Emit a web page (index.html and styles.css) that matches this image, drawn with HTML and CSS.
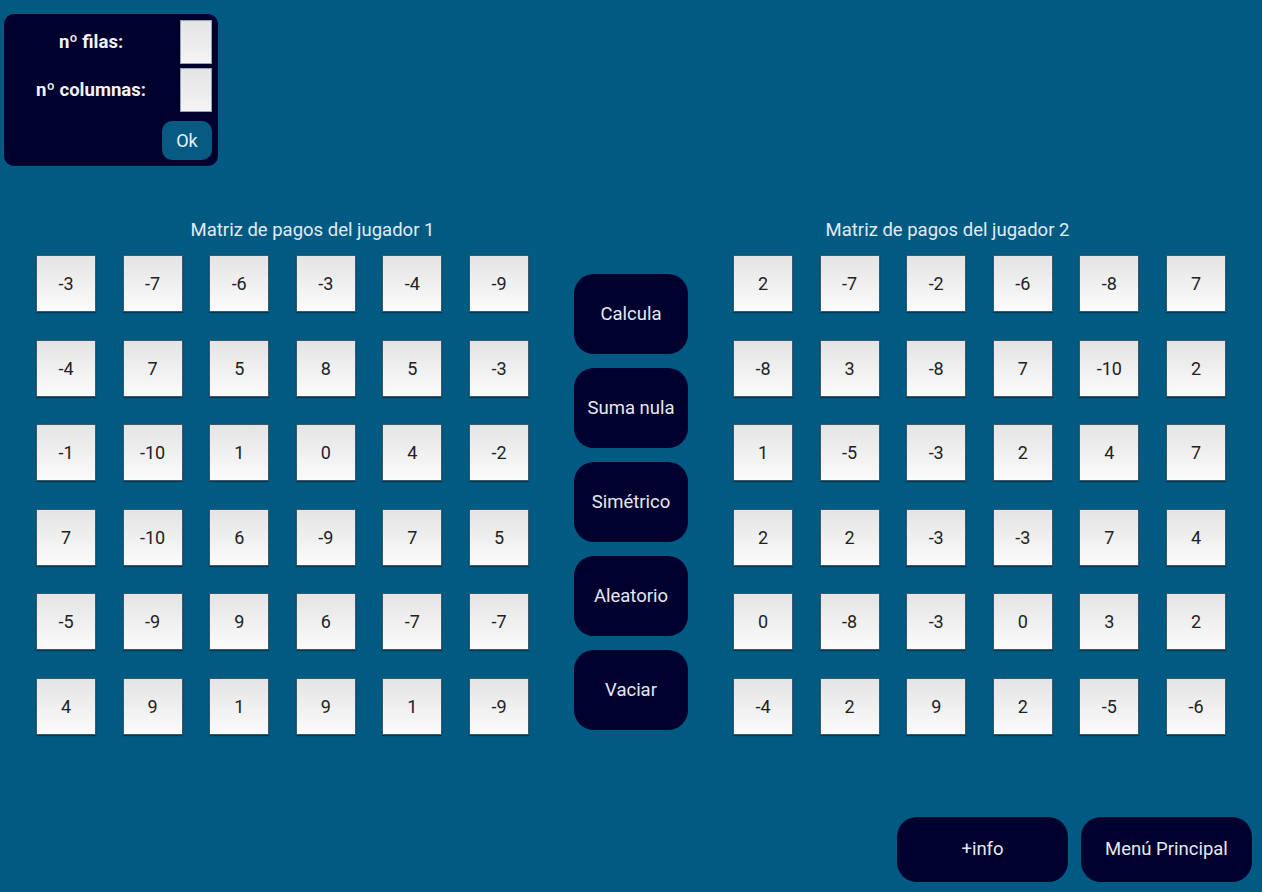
FILE: index.html
```html
<!DOCTYPE html>
<html lang="es">
<head>
<meta charset="utf-8">
<title>Matrices de pagos</title>
<link rel="stylesheet" href="styles.css">
</head>
<body>
<div class="config">
  <label class="config-label">nº filas:</label>
  <input class="config-input" type="text">
  <label class="config-label">nº columnas:</label>
  <input class="config-input" type="text">
  <button class="ok-btn">Ok</button>
</div>

<div class="board">
  <section class="matrix">
    <div class="matrix-title title-left">Matriz de pagos del jugador 1</div>
    <div class="grid">
      <div class="cell">-3</div><div class="cell">-7</div><div class="cell">-6</div><div class="cell">-3</div><div class="cell">-4</div><div class="cell">-9</div>
      <div class="cell">-4</div><div class="cell">7</div><div class="cell">5</div><div class="cell">8</div><div class="cell">5</div><div class="cell">-3</div>
      <div class="cell">-1</div><div class="cell">-10</div><div class="cell">1</div><div class="cell">0</div><div class="cell">4</div><div class="cell">-2</div>
      <div class="cell">7</div><div class="cell">-10</div><div class="cell">6</div><div class="cell">-9</div><div class="cell">7</div><div class="cell">5</div>
      <div class="cell">-5</div><div class="cell">-9</div><div class="cell">9</div><div class="cell">6</div><div class="cell">-7</div><div class="cell">-7</div>
      <div class="cell">4</div><div class="cell">9</div><div class="cell">1</div><div class="cell">9</div><div class="cell">1</div><div class="cell">-9</div>
    </div>
  </section>

  <div class="actions">
    <button class="action-btn">Calcula</button>
    <button class="action-btn">Suma nula</button>
    <button class="action-btn">Simétrico</button>
    <button class="action-btn">Aleatorio</button>
    <button class="action-btn">Vaciar</button>
  </div>

  <section class="matrix">
    <div class="matrix-title title-right">Matriz de pagos del jugador 2</div>
    <div class="grid">
      <div class="cell">2</div><div class="cell">-7</div><div class="cell">-2</div><div class="cell">-6</div><div class="cell">-8</div><div class="cell">7</div>
      <div class="cell">-8</div><div class="cell">3</div><div class="cell">-8</div><div class="cell">7</div><div class="cell">-10</div><div class="cell">2</div>
      <div class="cell">1</div><div class="cell">-5</div><div class="cell">-3</div><div class="cell">2</div><div class="cell">4</div><div class="cell">7</div>
      <div class="cell">2</div><div class="cell">2</div><div class="cell">-3</div><div class="cell">-3</div><div class="cell">7</div><div class="cell">4</div>
      <div class="cell">0</div><div class="cell">-8</div><div class="cell">-3</div><div class="cell">0</div><div class="cell">3</div><div class="cell">2</div>
      <div class="cell">-4</div><div class="cell">2</div><div class="cell">9</div><div class="cell">2</div><div class="cell">-5</div><div class="cell">-6</div>
    </div>
  </section>
</div>

<div class="footer">
  <button class="footer-btn">+info</button>
  <button class="footer-btn">Menú Principal</button>
</div>
</body>
</html>
```

FILE: styles.css
```css
* { box-sizing: border-box; }

html, body {
  margin: 0;
  padding: 0;
  height: 100%;
}

body {
  background: #015a82;
  font-family: Roboto, "Liberation Sans", sans-serif;
  color: #e6ecf2;
  overflow: hidden;
}

button {
  font-family: Roboto, "Liberation Sans", sans-serif;
  border: none;
  cursor: pointer;
}

/* top config panel */
.config {
  margin: 14px 0 0 4px;
  width: 214px;
  height: 152px;
  background: #00002e;
  border-radius: 10px;
  padding: 6px 6px 6px 2px;
  display: grid;
  grid-template-columns: 1fr 32px;
  grid-template-rows: 44px 44px 1fr;
  column-gap: 4px;
  row-gap: 4px;
  align-items: center;
}

.config-label {
  text-align: center;
  font-weight: 700;
  font-size: 18.5px;
  color: #f2f2f6;
}

.config-input {
  width: 32px;
  height: 44px;
  border: 1px solid #9aa0a8;
  background: linear-gradient(#e4e4e4, #f4f4f4);
  padding: 0;
}

.ok-btn {
  grid-column: 1 / 3;
  justify-self: end;
  align-self: end;
  width: 50px;
  height: 39px;
  border-radius: 10px;
  background: #075b82;
  color: #e6eef4;
  font-size: 18px;
}

/* main board */
.board {
  display: flex;
  align-items: flex-start;
  gap: 45px;
  margin: 53px 0 0 36px;
}

.matrix {
  width: 493px;
}

.matrix-title {
  height: 36px;
  line-height: 22px;
  font-size: 18.5px;
  text-align: center;
  color: #e2ecf4;
}

.title-left { padding-left: 60px; }
.title-right { padding-right: 64px; }

.grid {
  display: grid;
  grid-template-columns: repeat(6, 60px);
  grid-auto-rows: 57px;
  column-gap: 26.6px;
  row-gap: 27.5px;
}

.cell {
  display: flex;
  align-items: center;
  justify-content: center;
  background: linear-gradient(#e4e4e4, #fbfbfb);
  border: 1px solid #3d5868;
  box-shadow: 0 1px 1px rgba(0, 0, 0, 0.35);
  color: #222;
  font-size: 18px;
}

.actions {
  display: flex;
  flex-direction: column;
  gap: 14px;
  margin-top: 55px;
}

.action-btn {
  width: 114px;
  height: 80px;
  border-radius: 20px;
  background: #00002e;
  color: #e6e8f0;
  font-size: 18.5px;
}

/* footer */
.footer {
  display: flex;
  justify-content: flex-end;
  gap: 13px;
  margin-top: 82px;
  padding-right: 10px;
}

.footer-btn {
  width: 171px;
  height: 65px;
  border-radius: 20px;
  background: #00002e;
  color: #e6e8f0;
  font-size: 18.5px;
}
```
